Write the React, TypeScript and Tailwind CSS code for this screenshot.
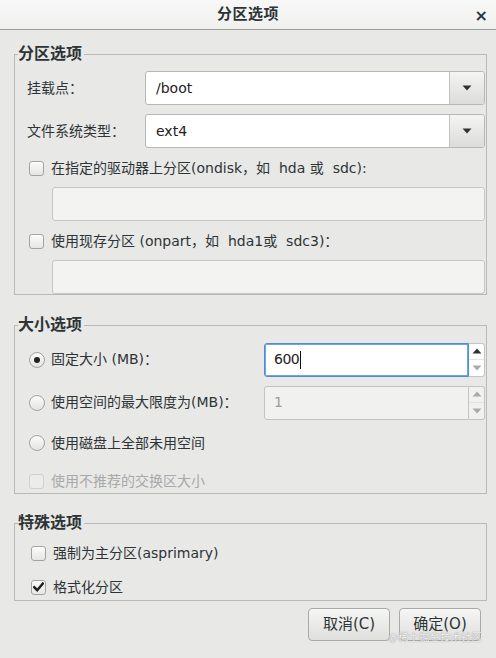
import React from "react";

const FONT = { fontFamily: '"DejaVu Sans", "Noto Sans CJK SC", sans-serif' };

function Check({ checked = false, disabled = false }: { checked?: boolean; disabled?: boolean }) {
  return (
    <span
      className={
        "flex h-[15px] w-[15px] shrink-0 items-center justify-center rounded-[3px] border " +
        (disabled
          ? "border-[#cfcfcd] bg-[#ececeb]"
          : "border-[#a3a3a0] bg-gradient-to-b from-[#fbfbfb] to-[#e6e6e5] shadow-[inset_0_1px_0_#ffffff]")
      }
    >
      {checked && (
        <svg width="11" height="10" viewBox="0 0 11 10">
          <path d="M1.2 5.2 L4.2 8.2 L9.8 1.6" fill="none" stroke="#1b1d1e" strokeWidth="2.4" strokeLinecap="square" />
        </svg>
      )}
    </span>
  );
}

function Radio({ checked = false }: { checked?: boolean }) {
  return (
    <span className="flex h-[16px] w-[16px] shrink-0 items-center justify-center rounded-full border border-[#a3a3a0] bg-gradient-to-b from-[#fbfbfb] to-[#e4e4e3]">
      {checked && <span className="h-[6px] w-[6px] rounded-full bg-[#202223]" />}
    </span>
  );
}

function Combo({ value }: { value: string }) {
  return (
    <div className="flex h-[34px] flex-1 overflow-hidden rounded-[3px] border border-[#b7b7b4] bg-white">
      <div className="flex flex-1 items-center pl-[10px] text-[14px] text-[#1e2021]">{value}</div>
      <div className="flex w-[35px] items-center justify-center border-l border-[#c3c3c0] bg-gradient-to-b from-[#f4f4f3] to-[#dcdcda]">
        <svg width="10" height="6" viewBox="0 0 10 6">
          <path d="M0.5 0.5 L9.5 0.5 L5 5.5 Z" fill="#2e3436" />
        </svg>
      </div>
    </div>
  );
}

function Spin({ value, focused = false }: { value: string; focused?: boolean }) {
  return (
    <div className="flex h-[34px] w-[221px]">
      <div
        className={
          "flex flex-1 items-center rounded-l-[3px] pl-[9px] text-[14px] " +
          (focused
            ? "border border-[#4a8fd9] bg-white text-[#1e2021] shadow-[inset_0_0_0_1px_#6fa6e2]"
            : "border border-[#c3c3c0] bg-[#f1f1f0] text-[#9a9c9c]")
        }
      >
        <span className="text-[14px] tracking-[-0.5px]">{value}</span>
        {focused && <span className="ml-[1px] h-[18px] w-[1px] bg-[#111]" />}
      </div>
      <div
        className={
          "flex w-[16px] flex-col rounded-r-[3px] border border-l-0 border-[#c3c3c0] " +
          (focused ? "bg-white" : "bg-[#f1f1f0]")
        }
      >
        <div className="flex flex-1 items-center justify-center border-b border-[#e3e3e1]">
          <svg width="10" height="6" viewBox="0 0 10 6">
            <path d="M0.5 5.5 L9.5 5.5 L5 0.5 Z" fill={focused ? "#2e3436" : "#a9abab"} />
          </svg>
        </div>
        <div className="flex flex-1 items-center justify-center">
          <svg width="10" height="6" viewBox="0 0 10 6">
            <path d="M0.5 0.5 L9.5 0.5 L5 5.5 Z" fill="#a9abab" />
          </svg>
        </div>
      </div>
    </div>
  );
}

function Legend({ children }: { children: React.ReactNode }) {
  return (
    <legend className="ml-[3px] pr-[2px] text-[16px] font-bold leading-[20px] text-[#2e3436]">{children}</legend>
  );
}

function DisabledEntry() {
  return <div className="h-[34px] rounded-[3px] border border-[#c6c6c3] bg-[#f3f3f1]" />;
}

export default function App() {
  return (
    <div style={FONT} className="relative h-[658px] w-[496px] overflow-hidden bg-[#e8e8e7] text-[#2e3436]">
      {/* title bar */}
      <div className="relative flex h-[30px] items-center justify-center border-b border-[#9c9c9a] bg-gradient-to-b from-[#f8f8f8] to-[#f0f0ef]">
        <span className="text-[15px] font-bold leading-none tracking-[0.5px] text-[#2e3436]">分区选项</span>
        <span className="absolute right-[8px] top-[4px] text-[16px] font-bold text-[#2e3436]">×</span>
      </div>

      <div className="pt-[14px]">
        {/* 分区选项 */}
        <fieldset className="ml-[14px] mr-[9px] border border-[#b9b9b6] p-0 pr-[1px]">
          <Legend>分区选项</Legend>
          <div className="pl-[12px] pt-[7px] text-[14px]">
            <div className="flex items-center">
              <span className="w-[118px] leading-[20px]">挂载点：</span>
              <Combo value="/boot" />
            </div>
            <div className="mt-[9px] flex items-center">
              <span className="w-[118px] leading-[20px]">文件系统类型：</span>
              <Combo value="ext4" />
            </div>
            <div className="ml-[2px] mt-[10px] flex h-[20px] items-center gap-[7px]">
              <Check />
              <span className="whitespace-pre">在指定的驱动器上分区(ondisk，如  hda 或  sdc):</span>
            </div>
            <div className="ml-[25px] mt-[9px]">
              <DisabledEntry />
            </div>
            <div className="ml-[2px] mt-[10px] flex h-[20px] items-center gap-[7px]">
              <Check />
              <span className="whitespace-pre">使用现存分区 (onpart，如  hda1或  sdc3)：</span>
            </div>
            <div className="ml-[25px] mt-[9px]">
              <DisabledEntry />
            </div>
          </div>
        </fieldset>

        {/* 大小选项 */}
        <fieldset className="ml-[14px] mr-[9px] mt-[20px] border border-[#b9b9b6] p-0 pb-[2px] pr-[1px]">
          <Legend>大小选项</Legend>
          <div className="pl-[14px] pt-[8px] text-[14px]">
            <div className="flex h-[33px] items-center">
              <div className="flex flex-1 items-center gap-[6px]">
                <Radio checked />
                <span>固定大小 (MB)：</span>
              </div>
              <Spin value="600" focused />
            </div>
            <div className="mt-[10px] flex h-[33px] items-center">
              <div className="flex flex-1 items-center gap-[6px]">
                <Radio />
                <span>使用空间的最大限度为(MB)：</span>
              </div>
              <Spin value="1" />
            </div>
            <div className="mt-[14px] flex h-[20px] items-center gap-[6px]">
              <Radio />
              <span>使用磁盘上全部未用空间</span>
            </div>
            <div className="mt-[18px] flex h-[20px] items-center gap-[7px] text-[#a8a9a9]">
              <Check disabled />
              <span>使用不推荐的交换区大小</span>
            </div>
          </div>
        </fieldset>

        {/* 特殊选项 */}
        <fieldset className="ml-[14px] mr-[9px] mt-[19px] border border-[#b9b9b6] p-0 pb-[3px] pr-[1px]">
          <Legend>特殊选项</Legend>
          <div className="pl-[16px] text-[14px]">
            <div className="mt-[10px] flex h-[20px] items-center gap-[7px]">
              <Check />
              <span>强制为主分区(asprimary)</span>
            </div>
            <div className="mt-[14px] flex h-[20px] items-center gap-[7px]">
              <Check checked />
              <span>格式化分区</span>
            </div>
          </div>
        </fieldset>

        {/* buttons */}
        <div className="mt-[7px] flex justify-end gap-[9px] pr-[15px]">
          <button className="flex h-[33px] w-[82px] items-center justify-center rounded-[4px] border border-[#a9a9a7] bg-gradient-to-b from-[#f6f6f5] to-[#dfdfdd] text-[15px] text-[#2e3436]">
            取消(C)
          </button>
          <button className="flex h-[33px] w-[82px] items-center justify-center rounded-[4px] border border-[#a9a9a7] bg-gradient-to-b from-[#f6f6f5] to-[#dfdfdd] text-[15px] text-[#2e3436]">
            确定(O)
          </button>
        </div>
      </div>

      {/* watermark */}
      <span
        style={{ fontFamily: '"Noto Sans CJK SC", sans-serif' }}
        className="pointer-events-none absolute left-[388px] top-[630px] whitespace-nowrap text-[10.5px] leading-[13px] text-[#f2f2f2] [text-shadow:0_0_1px_#7a7a7a]"
      >
        @稀土掘金技术社区
      </span>
    </div>
  );
}
